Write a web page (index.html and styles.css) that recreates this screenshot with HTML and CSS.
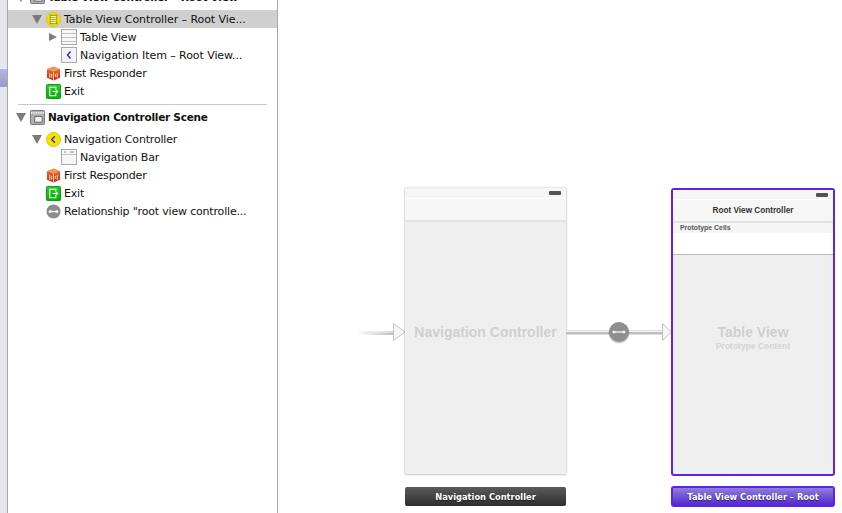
FILE: index.html
```html
<!DOCTYPE html>
<html lang="en">
<head>
<meta charset="utf-8">
<title>Storyboard</title>
<link rel="stylesheet" href="styles.css">
</head>
<body>
<svg class="defs" width="0" height="0" aria-hidden="true">
  <defs>
    <linearGradient id="cube" x1="0" y1="0" x2="0" y2="1"><stop offset="0" stop-color="#ee7a35"/><stop offset="1" stop-color="#b5300f"/></linearGradient>
    <linearGradient id="green" x1="0" y1="0" x2="0" y2="1"><stop offset="0" stop-color="#27d024"/><stop offset="1" stop-color="#06ad06"/></linearGradient>
    <linearGradient id="fade" x1="0" y1="0" x2="36" y2="0" gradientUnits="userSpaceOnUse"><stop offset="0" stop-color="#c0c0c0" stop-opacity="0"/><stop offset="1" stop-color="#bdbdbd"/></linearGradient>
    <symbol id="i-responder" viewBox="0 0 16 16">
      <path d="M1 3.5 8 .5l7 3v9l-7 3-7-3z" fill="url(#cube)"/>
      <path d="M1 3.5 8 6.2l7-2.7-7-3z" fill="#f2955a"/>
      <path d="M4 7.5v5M8 6.5v9M12 7.5v5M6 8.5v4M10 8.5v3" stroke="#fbdcc6" stroke-width="1" fill="none"/>
    </symbol>
    <symbol id="i-exit" viewBox="0 0 16 16">
      <rect x=".5" y=".5" width="15" height="15" rx="1" fill="url(#green)" stroke="#0b980b"/>
      <path d="M10.500 5V3.500H4v9h6.500V11" fill="none" stroke="#fff" stroke-width="1.200"/>
      <path d="M7 8h5M10 5.800 12.400 8 10 10.200" fill="none" stroke="#fff" stroke-width="1.200"/>
    </symbol>
    <symbol id="i-scene" viewBox="0 0 16 16">
      <rect x=".5" y=".5" width="15" height="15" rx="1" fill="#b0b0b0" stroke="#6f6f6f"/>
      <path d="M1 3h14" stroke="#eee" stroke-width="2" stroke-dasharray="1.500 1"/>
      <rect x="5" y="7" width="8" height="6" fill="#f2f2f2" stroke="#666"/>
    </symbol>
    <symbol id="i-tvc" viewBox="0 0 16 16">
      <circle cx="8" cy="8" r="7.500" fill="#f2e300" stroke="#d6c700"/>
      <rect x="4.500" y="3.500" width="7" height="9" fill="#fdf9b0" stroke="#8f8a20"/>
      <path d="M5.500 6h5M5.500 8h5M5.500 10h5" stroke="#a8a230"/>
    </symbol>
    <symbol id="i-nc" viewBox="0 0 16 16">
      <circle cx="8" cy="8" r="7.500" fill="#f2e300" stroke="#d6c700"/>
      <path d="M9.500 4.500 6 8l3.500 3.500" fill="none" stroke="#3a22c8" stroke-width="1.400"/>
    </symbol>
    <symbol id="i-table" viewBox="0 0 16 16">
      <rect x=".5" y=".5" width="15" height="15" fill="#f7f7f7" stroke="#a9a9a9"/>
      <path d="M1 4.500h14M1 8.500h14M1 12.500h14" stroke="#c2c2c2"/>
    </symbol>
    <symbol id="i-item" viewBox="0 0 16 16">
      <rect x=".5" y=".5" width="15" height="15" fill="#f4f4f8" stroke="#a9a9a9"/>
      <path d="M9.500 4.500 6.500 8l3 3.500" fill="none" stroke="#3a22c8" stroke-width="1.400"/>
    </symbol>
    <symbol id="i-bar" viewBox="0 0 16 16">
      <rect x=".5" y=".5" width="15" height="15" fill="#f6f6f6" stroke="#a9a9a9"/>
      <path d="M1 5.500h14" stroke="#c2c2c2"/>
      <path d="M3 3h2M9 3h4" stroke="#8a8ab8"/>
    </symbol>
    <symbol id="i-rel" viewBox="0 0 16 16">
      <circle cx="8" cy="8" r="7.500" fill="#8c8c8c"/>
      <path d="M4.500 8h7" stroke="#eee" stroke-width="1.400"/>
      <circle cx="4.500" cy="8" r="1.700" fill="#eee"/><circle cx="11.500" cy="8" r="1.700" fill="#eee"/>
    </symbol>
  </defs>
</svg>

<div class="app">
  <div class="rail"><div class="rail-mark"></div></div>
  <nav class="outline">
    <div class="row lvl-0 top-cut">
      <span class="tri down"></span><svg class="ic"><use href="#i-scene"/></svg>
      <b class="scene-title">Table View Controller – Root View</b>
    </div>
    <div class="row lvl-1 selected wide">
      <span class="tri down"></span><svg class="ic"><use href="#i-tvc"/></svg>
      <span>Table View Controller – Root Vie...</span>
    </div>
    <div class="row lvl-2">
      <span class="tri right"></span><svg class="ic"><use href="#i-table"/></svg>
      <span>Table View</span>
    </div>
    <div class="row lvl-2 wide">
      <span class="tri none"></span><svg class="ic"><use href="#i-item"/></svg>
      <span>Navigation Item – Root View...</span>
    </div>
    <div class="row lvl-1">
      <span class="tri none"></span><svg class="ic"><use href="#i-responder"/></svg>
      <span>First Responder</span>
    </div>
    <div class="row lvl-1">
      <span class="tri none"></span><svg class="ic"><use href="#i-exit"/></svg>
      <span>Exit</span>
    </div>
    <div class="sep"></div>
    <div class="row lvl-0 scene-row">
      <span class="tri down"></span><svg class="ic"><use href="#i-scene"/></svg>
      <b class="scene-title">Navigation Controller Scene</b>
    </div>
    <div class="row lvl-1 first-child">
      <span class="tri down"></span><svg class="ic"><use href="#i-nc"/></svg>
      <span>Navigation Controller</span>
    </div>
    <div class="row lvl-2">
      <span class="tri none"></span><svg class="ic"><use href="#i-bar"/></svg>
      <span>Navigation Bar</span>
    </div>
    <div class="row lvl-1">
      <span class="tri none"></span><svg class="ic"><use href="#i-responder"/></svg>
      <span>First Responder</span>
    </div>
    <div class="row lvl-1">
      <span class="tri none"></span><svg class="ic"><use href="#i-exit"/></svg>
      <span>Exit</span>
    </div>
    <div class="row lvl-1">
      <span class="tri none"></span><svg class="ic"><use href="#i-rel"/></svg>
      <span>Relationship "root view controlle...</span>
    </div>
  </nav>

  <main class="canvas">
    <svg class="segue seg-in" viewBox="0 0 50 20" aria-hidden="true">
      <path d="M0 11h38" stroke="url(#fade)" stroke-width="4"/>
      <path d="M14 10h24" stroke="#f6f6f6" stroke-width="1"/>
      <path d="M36.500 1.500 48 10 36.500 18.500z" fill="#f5f5f5" stroke="#c4c4c4"/>
    </svg>

    <section class="device dev-nav">
      <div class="status"><i class="battery"></i></div>
      <div class="navbar"></div>
      <div class="body"><strong class="ghost">Navigation Controller</strong></div>
    </section>

    <svg class="segue seg-rel" viewBox="0 0 106 36" aria-hidden="true">
      <path d="M0 18.500h98" stroke="#bdbdbd" stroke-width="4"/>
      <path d="M0 17.500h98" stroke="#f6f6f6" stroke-width="1"/>
      <path d="M96.500 9.500 105.500 18 96.500 26.500z" fill="#f5f5f5" stroke="#c4c4c4"/>
      <circle cx="53" cy="19" r="10.500" fill="#000" opacity=".18"/>
      <circle cx="53" cy="18" r="10" fill="#8f8f8f"/>
      <path d="M48 18h10" stroke="#eee" stroke-width="1.400"/>
      <circle cx="48" cy="18" r="1.600" fill="#eee"/><circle cx="58" cy="18" r="1.600" fill="#eee"/>
    </svg>

    <section class="device dev-table">
      <div class="status"><i class="battery"></i></div>
      <div class="navbar"><span class="nav-title">Root View Controller</span></div>
      <div class="proto-head">Prototype Cells</div>
      <div class="proto-cell"></div>
      <div class="body body-table">
        <strong class="ghost">Table View</strong>
        <small class="ghost-sub">Prototype Content</small>
      </div>
    </section>

    <div class="scene-label label-nav">Navigation Controller</div>
    <div class="scene-label label-table">Table View Controller – Root</div>
  </main>
</div>
</body>
</html>
```

FILE: styles.css
```css
* { box-sizing: border-box; }
html, body { margin: 0; height: 100%; }
body { overflow: hidden; background: #fff; font-family: "DejaVu Sans", sans-serif; color: #111; }
.defs { position: absolute; }

.app { display: flex; width: 842px; height: 513px; }

.rail { width: 8px; flex: none; background: #e6e6f0; border-right: 1px solid #a8a8a8; padding-top: 69px; }
.rail-mark { height: 18px; background: linear-gradient(#b8b6dc, #9a98cc); }

.outline { width: 270px; flex: none; border-right: 1px solid #a8a8a8; background: #fff; overflow: hidden; margin-top: -12px; font-size: 11px; letter-spacing: -.18px; }

.row { display: flex; align-items: center; height: 18px; white-space: nowrap; }
.row .ic { width: 16px; height: 16px; flex: none; margin-right: 3px; }
.lvl-0 { padding-left: 8px; }
.lvl-0 .tri { width: 14px; }
.lvl-0 .tri.down::before { left: 0; }
.lvl-1 { padding-left: 22px; }
.lvl-1 .ic, .lvl-0 .ic { width: 15px; height: 15px; }
.lvl-2 { padding-left: 37px; }
.wide { letter-spacing: -.07px; }
.selected { background: #cfcfcf; }
.top-cut { margin-bottom: 4px; }
.top-cut .ic { margin-top: -2px; }
.scene-title { font-weight: bold; font-size: 10.5px; letter-spacing: -.25px; }
.scene-row { margin-top: 3px; }
.first-child { margin-top: 4px; }

.tri { width: 16px; flex: none; height: 9px; position: relative; }
.tri.down::before { content: ""; position: absolute; left: 2px; top: 0; border-left: 5px solid transparent; border-right: 5px solid transparent; border-top: 9px solid #7c7c7c; }
.tri.right::before { content: ""; position: absolute; left: 4px; top: 0; border-top: 4.5px solid transparent; border-bottom: 4.5px solid transparent; border-left: 8px solid #7c7c7c; }

.sep { height: 1px; background: #c8c8c8; margin: 4px 10px 0 10px; }

.canvas { position: relative; flex: 1; background: #fff; overflow: hidden; }

.device { position: absolute; top: 188px; display: flex; flex-direction: column; background: #efefef; }
.dev-nav { left: 127px; width: 161px; height: 286px; box-shadow: 0 0 2px rgba(0,0,0,.25), 0 1px 2px rgba(0,0,0,.15); }
.dev-table { left: 393px; width: 164px; height: 288px; border: 2px solid #5f22e6; border-radius: 3px; }

.status { height: 11px; flex: none; background: #f6f6f6; border-bottom: 1px solid #fff; display: flex; justify-content: flex-end; align-items: center; padding-right: 5px; }
.battery { display: block; width: 12px; height: 4px; background: #555; border-radius: 1px; }
.navbar { height: 23px; flex: none; background: #f6f6f6; border-bottom: 2px solid #e3e3e3; display: flex; align-items: center; justify-content: center; }
.dev-table .status { height: 10px; }
.nav-title { font: bold 8.2px "Liberation Sans", sans-serif; color: #333; }
.proto-head { height: 10px; flex: none; background: #f5f5f5; font: bold 6.9px "Liberation Sans", sans-serif; color: #555; padding-left: 7px; line-height: 10px; }
.proto-cell { height: 22px; flex: none; background: #fff; border-bottom: 1px solid #bbb; }

.body { flex: 1; display: flex; flex-direction: column; align-items: center; padding-top: 101px; }
.body-table { padding-top: 68px; }
.ghost { font: bold 14px "Liberation Sans", sans-serif; color: #cfcfcf; line-height: 18px; }
.ghost-sub { font: bold 8.5px "Liberation Sans", sans-serif; color: #d4d4d4; line-height: 10px; }

.segue { position: absolute; display: block; }
.seg-in { left: 79px; top: 322px; width: 50px; height: 20px; }
.seg-rel { left: 288px; top: 314px; width: 106px; height: 36px; }

.scene-label { position: absolute; top: 487px; height: 19px; display: flex; align-items: center; justify-content: center; font: bold 8.3px "DejaVu Sans", sans-serif; color: #fff; text-shadow: 0 1px 1px rgba(0,0,0,.6); border-radius: 2px; }
.label-nav { left: 127px; width: 161px; background: linear-gradient(#5a5a5a, #2e2e2e); }
.label-table { left: 393px; top: 486px; height: 21px; width: 164px; background: linear-gradient(#8e80d8, #5428d0); border: 2px solid #5f22e6; border-radius: 3px; }
```
